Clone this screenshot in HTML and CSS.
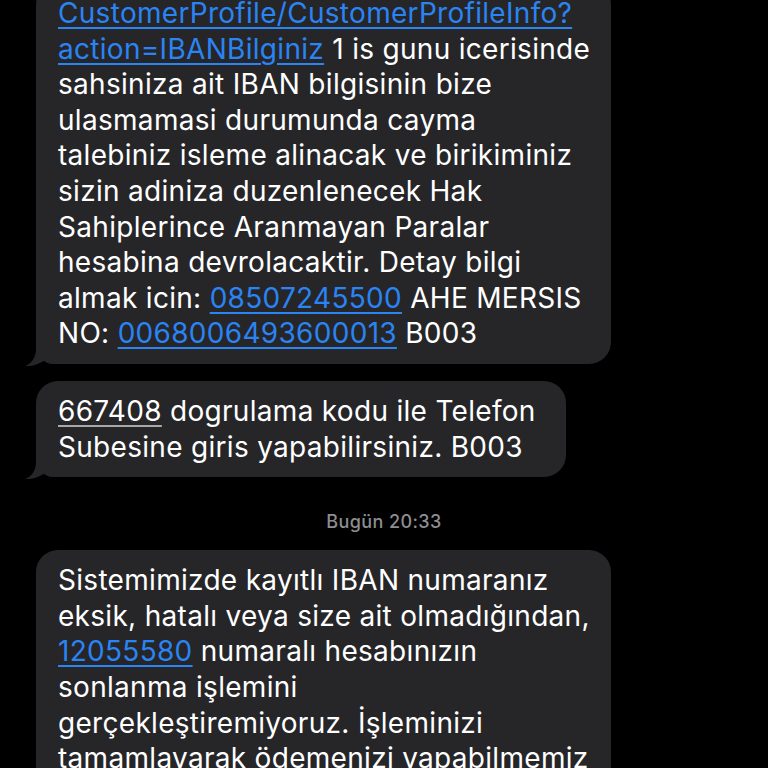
FILE: index.html
```html
<!DOCTYPE html>
<html lang="tr">
<head>
<meta charset="utf-8">
<title>Mesajlar</title>
<link rel="stylesheet" href="styles.css">
</head>
<body>
<main class="thread">
  <div class="bubble tailed">
    <p class="text">
      <a class="link" href="#">CustomerProfile/CustomerProfileInfo?</a><br>
      <a class="link" href="#">action=IBANBilginiz</a> 1 is gunu icerisinde<br>
      sahsiniza ait IBAN bilgisinin bize<br>
      ulasmamasi durumunda cayma<br>
      talebiniz isleme alinacak ve birikiminiz<br>
      sizin adiniza duzenlenecek Hak<br>
      Sahiplerince Aranmayan Paralar<br>
      hesabina devrolacaktir. Detay bilgi<br>
      almak icin: <a class="link" href="#">08507245500</a> AHE MERSIS<br>
      NO: <a class="link" href="#">0068006493600013</a> B003
    </p>
    <svg class="tail" viewBox="0 0 30 26" width="30" height="26" aria-hidden="true"><path d="M11 0 L11 8 C11 16 7 22 0.5 25 C7 25.5 14 23 19 19.5 C22 22 26 23 30 23 L30 0 Z"/></svg>
  </div>

  <div class="bubble tailed short">
    <p class="text">
      <span class="code">667408</span> dogrulama kodu ile Telefon<br>
      Subesine giris yapabilirsiniz. B003
    </p>
    <svg class="tail" viewBox="0 0 30 26" width="30" height="26" aria-hidden="true"><path d="M11 0 L11 8 C11 16 7 22 0.5 25 C7 25.5 14 23 19 19.5 C22 22 26 23 30 23 L30 0 Z"/></svg>
  </div>

  <div class="stamp">Bugün 20:33</div>

  <div class="bubble">
    <p class="text">
      Sistemimizde kayıtlı IBAN numaranız<br>
      eksik, hatalı veya size ait olmadığından,<br>
      <a class="link" href="#">12055580</a> numaralı hesabınızın<br>
      sonlanma işlemini<br>
      gerçekleştiremiyoruz. İşleminizi<br>
      tamamlayarak ödemenizi yapabilmemiz<br>
      için lütfen IBAN bilginizi güncelleyiniz.
    </p>
  </div>
</main>
</body>
</html>
```

FILE: styles.css
```css
* { box-sizing: border-box; }

html, body {
  margin: 0;
  padding: 0;
  background: #000;
  height: 768px;
  overflow: hidden;
}

body {
  font-family: Inter, "Noto Sans", "Liberation Sans", sans-serif;
  color: #fff;
}

.thread {
  display: flex;
  flex-direction: column;
  align-items: flex-start;
  padding-left: 36px;
  margin-top: -17px;
}

.bubble {
  position: relative;
  width: fit-content;
  max-width: 580px;
  background: #262629;
  border-radius: 22px;
  padding: 13px 21px 12px 22px;
}

.bubble.tailed {
  border-bottom-left-radius: 18px;
}

.bubble.short {
  padding-right: 30px;
}

.bubble + .bubble {
  margin-top: 17px;
}

.text {
  margin: 0;
  font-size: 28px;
  line-height: 35.6px;
  white-space: nowrap;
  letter-spacing: 0.3px;
}

.link {
  color: #2a84f3;
  text-decoration: underline;
  text-decoration-thickness: 2px;
  text-underline-offset: 4px;
}

.code {
  text-decoration: underline;
  text-decoration-color: rgba(255, 255, 255, 0.6);
  text-decoration-thickness: 2px;
  text-underline-offset: 4px;
}

.tail {
  position: absolute;
  left: -11px;
  bottom: -3px;
  fill: #262629;
}

.stamp {
  align-self: center;
  margin: 35px 0 18px -36px;
  font-size: 18px;
  font-weight: 500;
  letter-spacing: 0.4px;
  color: #8d8d92;
  line-height: 20px;
}
```
